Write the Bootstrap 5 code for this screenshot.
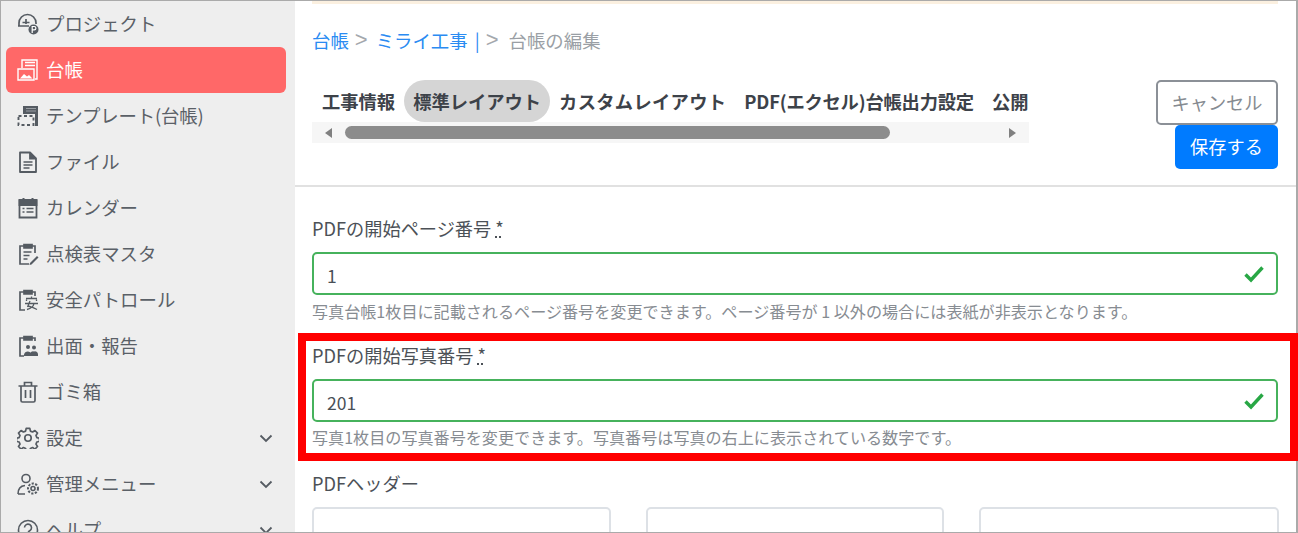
<!DOCTYPE html>
<html lang="ja">
<head>
<meta charset="utf-8">
<title>台帳の編集</title>
<link href="https://cdn.jsdelivr.net/npm/bootstrap@5.3.0/dist/css/bootstrap.min.css" rel="stylesheet">
<style>
html,body{height:533px;overflow:hidden}
body{font-family:"Noto Sans CJK JP","Noto Sans",sans-serif;color:#495057;background:#fff}
.page-wrap{position:relative;height:533px;overflow:hidden}
.shell{height:533px;border:1px solid #aaa;border-right-width:2px;overflow:hidden}
.side{width:294px;flex:none;background:#eee;height:100%;padding:0 9px 0 5px;overflow:hidden}
.side-item{height:46px;display:flex;align-items:center;padding-left:11px;padding-right:13px;color:#5a6067;font-size:18.4px;border-radius:6px;text-decoration:none;white-space:nowrap}
.side-item svg.ico{width:22px;height:22px;flex:none;margin-right:7px}
.side-item.on{background:#ff6868;color:#fff}
.narrow-latin{letter-spacing:-.15px}
.chev{margin-left:auto;width:14px;height:14px;flex:none}
.main-pane{flex:1;min-width:0}
.top-stripe{height:3px;background:#fbf0e0;margin:0 18px 0 17px}
.head-zone{padding:0 18px 0 17px;height:183px;border-bottom:2px solid #e1e1e1}
.crumbs{padding-top:23px;height:76px;font-size:18.4px;line-height:26px;color:#9a9fa5;white-space:nowrap;display:flex;align-items:flex-start}
.crumbs a{color:#2a8bf2;text-decoration:none;word-spacing:3px}
.crumb-sep{font-size:22px;font-family:"Liberation Sans",sans-serif;font-weight:400;margin:0 8px 0 6px;line-height:26px;color:#a4a8ad}
.crumb-end{margin-left:2px}
.tabs-wrap{width:717px}
.tab-row{height:42px;font-weight:700;color:#3d4249;font-size:18.3px;white-space:nowrap;padding-left:1px}
.tab-lnk{padding:0 9px;line-height:42px;height:42px;border-radius:21px}
.tab-lnk.sel{background:#d5d5d5}
.tab-wide{letter-spacing:.3px}
.tab-tight{letter-spacing:-.2px}
.fake-scroll{height:21px;background:#f6f6f6}
.fake-thumb{height:13px;width:545px;margin-left:13px;background:#8c8c8c;border-radius:7px}
.arrow-l,.arrow-r{width:0;height:0;border-top:5.5px solid transparent;border-bottom:5.5px solid transparent}
.arrow-l{border-right:7px solid #808080;margin-left:13px}
.arrow-r{border-left:7px solid #808080;margin-left:119px}
.btn-cancel{width:122px;height:45px;border:2px solid #8b9097;border-radius:5px;background:#fff;color:#868b91;font-size:18.2px;padding:0}
.btn-save{width:103px;height:44px;background:#007bff;border:0;border-radius:5px;color:#fff;font-size:18.2px;padding:0}
.form-zone{padding:30px 18px 0 17px}
.fld-a{margin-bottom:23px}
.fld-b{margin-bottom:25px}
.fld-label{display:block;font-size:18.2px;line-height:22px;color:#4c5157;margin-bottom:11px;height:24px;white-space:nowrap}
.fld-label abbr{text-decoration:underline dotted;color:#4c5157}
.form-control.inp{height:43px;font-size:17.5px;color:#495057;padding:4px 13px 0;border-radius:5px;border:2px solid #d9dde2}
.form-control.inp.is-valid{border-color:#46b25c;padding-right:40px;background-size:20px 20px;background-position:right 12px center;background-image:url("data:image/svg+xml,%3Csvg xmlns='http://www.w3.org/2000/svg' viewBox='0 0 20 20'%3E%3Cpath fill='none' stroke='%2328a745' stroke-width='3.4' d='M1.500 10.500l5.500 5.500L18.500 3.500'/%3E%3C/svg%3E")}
.hint{font-size:16.1px;line-height:20px;color:#878c92;margin-top:6px;white-space:nowrap}
.hint-tight{margin-top:5px}
.red-frame{position:absolute;left:298px;top:333px;width:1000px;height:128px;border:8px solid #f00;pointer-events:none}
.triple{display:grid;grid-template-columns:299px 298px 300px;column-gap:35px;margin-top:1px}
.triple .inp{height:60px;border-color:#dde1e6}
</style>
</head>
<body>
<div class="page-wrap">
<div class="shell d-flex">
<nav class="side">
 <a class="side-item" href="#"><svg class="ico" viewBox="0 0 22 22" fill="none" stroke="#555b62" stroke-width="1.700"><path d="M2 13V10a8.500 8.500 0 0 1 17 0v1"/><path d="M1 13h11M9 6v5M5.500 9.500h7"/><circle cx="16.500" cy="16.500" r="5" fill="#555b62" stroke="none"/><path d="M15.200 20v-6.500h2a1.700 1.700 0 0 1 0 3.400h-2" stroke="#fff" stroke-width="1.200"/></svg><span>プロジェクト</span></a>
 <a class="side-item on" href="#"><svg class="ico" viewBox="0 0 22 22" fill="none" stroke="#fff" stroke-width="1.400"><path d="M5 9V1h15v19h-2"/><path d="M8 3.500h10M8 6.500h10" stroke-width="1.300"/><path d="M1 10h16v11H1z"/><path d="M3 19.500l4-4.500 3 2.500 2-1.500 3.500 3.500z" fill="#fff" stroke="none"/></svg><span>台帳</span></a>
 <a class="side-item" href="#"><svg class="ico" viewBox="0 0 22 22" fill="none" stroke="#555b62"><path d="M6 1h15v20h-3V9H6z" fill="#555b62" stroke="none"/><path d="M9 3.500h10M9 6h10" stroke="#9a9ea3" stroke-width="1.200"/><path d="M1.500 11h15v9h-15z" stroke-width="1.900" stroke-dasharray="3 2.500"/></svg><span class="narrow-latin">テンプレート(台帳)</span></a>
 <a class="side-item" href="#"><svg class="ico" viewBox="0 0 22 22" fill="none" stroke="#555b62" stroke-width="1.800"><path d="M3 1.500h10l6 6v13.500H3z" stroke-linejoin="round"/><path d="M13 1.500v6h6" fill="#555b62"/><path d="M6.500 11h9M6.500 14h9M6.500 17h6" stroke-width="1.500"/></svg><span>ファイル</span></a>
 <a class="side-item" href="#"><svg class="ico" viewBox="0 0 22 22" fill="none" stroke="#555b62" stroke-width="1.800"><path d="M2.500 3.500h17v17h-17z"/><path d="M2.500 3h17v5h-17z" fill="#555b62"/><path d="M6.500 1v3M15.500 1v3" stroke-width="2"/><path d="M5.500 11.500h2M9.500 11.500h7M5.500 15h2M9.500 15h7" stroke-width="1.500"/></svg><span>カレンダー</span></a>
 <a class="side-item" href="#"><svg class="ico" viewBox="0 0 22 22" fill="none" stroke="#555b62" stroke-width="1.700"><path d="M7 3H3v18h9"/><path d="M15 3h3v7"/><path d="M7 1.500h8v3.500H7z" fill="#555b62"/><path d="M6.500 9h8M6.500 12.500h6M6.500 16h4" stroke-width="1.400"/><path d="M13 20l7-7 1.500 1.500-7 7-2 .5z" fill="#555b62" stroke="none"/></svg><span>点検表マスタ</span></a>
 <a class="side-item" href="#"><svg class="ico" viewBox="0 0 22 22" fill="none" stroke="#555b62" stroke-width="1.700"><path d="M7 3H3v18h5"/><path d="M15 3h3v4"/><path d="M7 1.500h8v3.500H7z" fill="#555b62"/><path d="M9 9.500h11M14.500 7.500v2M9.500 12v-1.500M19.500 12v-1.500M8 14.500h13M13 12l-2.500 6M17 14.500c-.5 3-3 5-7 6M11 17c3 .5 6 2 9 3.500" stroke-width="1.300"/></svg><span>安全パトロール</span></a>
 <a class="side-item" href="#"><svg class="ico" viewBox="0 0 22 22" fill="none" stroke="#555b62" stroke-width="1.700"><path d="M7 3H3v18h4"/><path d="M15 3h3v3"/><path d="M7 1.500h8v3.500H7z" fill="#555b62"/><circle cx="11" cy="12" r="2" fill="#555b62" stroke="none"/><path d="M7 21v-1.500a4 4 0 0 1 4-3 4 4 0 0 1 3 1.500v3z" fill="#555b62" stroke="none"/><path d="M13 21v-2a3 3 0 0 1 4-2.500 3 3 0 0 1 4 2.500v2z" fill="#555b62" stroke="none"/><circle cx="17" cy="12.500" r="2" fill="#555b62" stroke="none"/></svg><span>出面・報告</span></a>
 <a class="side-item" href="#"><svg class="ico" viewBox="0 0 22 22" fill="none" stroke="#555b62" stroke-width="1.700"><path d="M1.500 5h19M7.500 5V1.500h7V5"/><path d="M4 5v14.500A1.500 1.500 0 0 0 5.500 21h11a1.500 1.500 0 0 0 1.500-1.500V5"/><path d="M8.500 9v8M13.500 9v8"/></svg><span>ゴミ箱</span></a>
 <a class="side-item" href="#"><svg class="ico" viewBox="0 0 24 24" fill="none" stroke="#555b62" stroke-width="1.800" stroke-linejoin="round"><circle cx="12" cy="12" r="3.500"/><path d="M10 1.500h4l.6 3 2.400 1 2.600-1.700 2.800 2.800-1.700 2.600 1 2.400 2.800.6v3.500l-2.800.6-1 2.400 1.700 2.600-2.800 2.800-2.600-1.700-2.400 1-.6 3h-4l-.6-3-2.400-1-2.600 1.700-2.800-2.800 1.700-2.600-1-2.400-2.800-.6v-3.500l2.800-.6 1-2.400-1.700-2.600 2.800-2.800 2.600 1.700 2.400-1z"/></svg><span>設定</span><svg class="chev" viewBox="0 0 14 14" fill="none" stroke="#555b62" stroke-width="1.800"><path d="M1.500 4.500L7 10l5.500-5.500"/></svg></a>
 <a class="side-item" href="#"><svg class="ico" viewBox="0 0 22 22" fill="none" stroke="#555b62" stroke-width="1.600"><circle cx="9" cy="5.500" r="4"/><path d="M1 21c0-5 2-8 7-8.500M1 21h7"/><circle cx="16" cy="15.500" r="2"/><circle cx="16" cy="15.500" r="5" stroke-width="2" stroke-dasharray="2.200 1.400"/></svg><span>管理メニュー</span><svg class="chev" viewBox="0 0 14 14" fill="none" stroke="#555b62" stroke-width="1.800"><path d="M1.500 4.500L7 10l5.500-5.500"/></svg></a>
 <a class="side-item" href="#"><svg class="ico" viewBox="0 0 22 22" fill="none" stroke="#555b62" stroke-width="1.600"><circle cx="11" cy="11" r="9.500"/><path d="M7.500 8.500a3.500 3.500 0 1 1 5.500 3c-1.300.8-2 1.500-2 3M11 16v2"/></svg><span>ヘルプ</span><svg class="chev" viewBox="0 0 14 14" fill="none" stroke="#555b62" stroke-width="1.800"><path d="M1.500 4.500L7 10l5.500-5.500"/></svg></a>
</nav>
<main class="main-pane">
 <div class="top-stripe"></div>
 <div class="head-zone">
  <div class="crumbs"><a href="#">台帳</a><span class="crumb-sep">&gt;</span><a href="#">ミライ工事 |</a><span class="crumb-sep">&gt;</span><span class="crumb-end">台帳の編集</span></div>
  <div class="d-flex justify-content-between">
   <div class="tabs-wrap">
    <div class="tab-row d-flex">
     <span class="tab-lnk">工事情報</span><span class="tab-lnk sel">標準レイアウト</span><span class="tab-lnk tab-wide">カスタムレイアウト</span><span class="tab-lnk tab-tight">PDF(エクセル)台帳出力設定</span><span class="tab-lnk">公開</span>
    </div>
    <div class="fake-scroll d-flex align-items-center">
     <span class="arrow-l"></span><div class="fake-thumb"></div><span class="arrow-r"></span>
    </div>
   </div>
   <div class="d-flex flex-column align-items-end">
    <button class="btn btn-cancel" type="button">キャンセル</button>
    <button class="btn btn-save" type="button">保存する</button>
   </div>
  </div>
 </div>
 <div class="form-zone">
  <div class="fld-a">
   <label class="fld-label">PDFの開始ページ番号 <abbr>*</abbr></label>
   <input class="form-control inp is-valid" value="1">
   <div class="hint">写真台帳1枚目に記載されるページ番号を変更できます。ページ番号が 1 以外の場合には表紙が非表示となります。</div>
  </div>
  <div class="fld-b">
   <label class="fld-label">PDFの開始写真番号 <abbr>*</abbr></label>
   <input class="form-control inp is-valid" value="201">
   <div class="hint hint-tight">写真1枚目の写真番号を変更できます。写真番号は写真の右上に表示されている数字です。</div>
  </div>
  <div>
   <label class="fld-label">PDFヘッダー</label>
   <div class="triple"><input class="form-control inp"><input class="form-control inp"><input class="form-control inp"></div>
  </div>
 </div>
</main>
</div>
<div class="red-frame"></div>
</div>
<script src="https://cdn.jsdelivr.net/npm/bootstrap@5.3.0/dist/js/bootstrap.bundle.min.js"></script>
</body>
</html>
